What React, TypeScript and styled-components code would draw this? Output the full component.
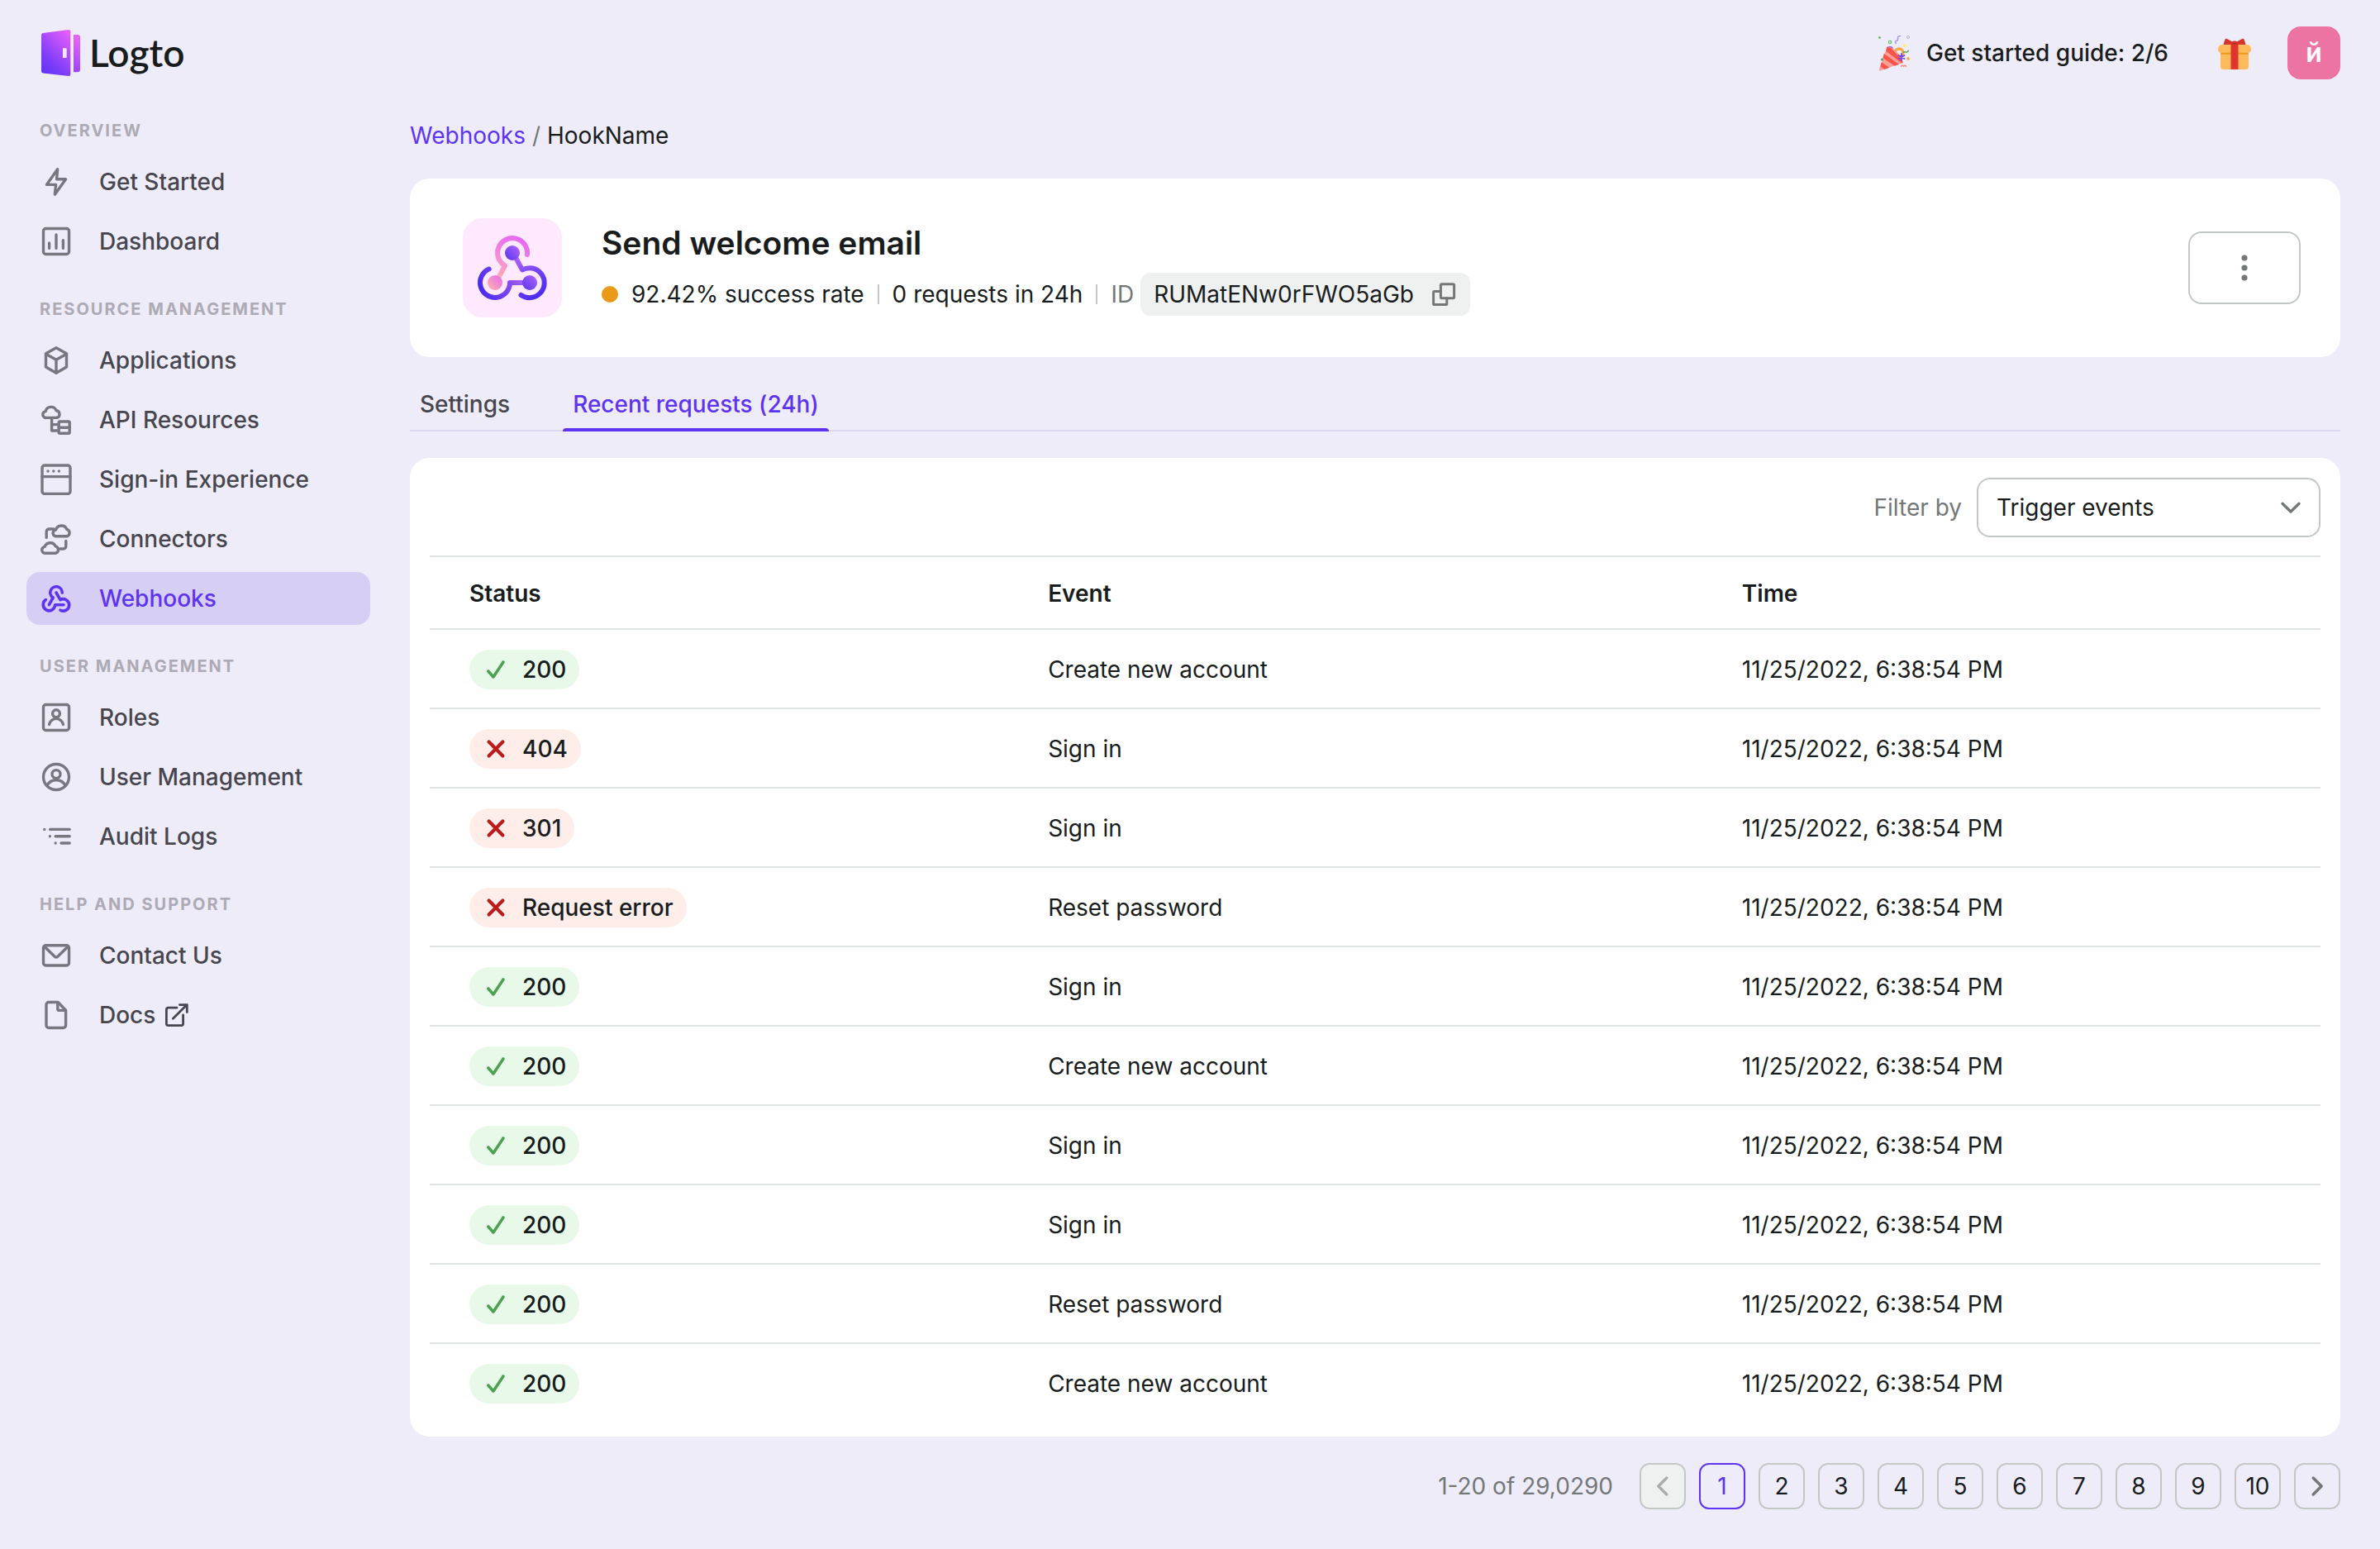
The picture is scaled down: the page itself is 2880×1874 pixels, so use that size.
import React, { useState } from "react";
import styled, { createGlobalStyle, css } from "styled-components";

const color = {
  page: "#eeecf9",
  card: "#ffffff",
  text: "#191c1d",
  navText: "#47464e",
  navIcon: "#78767f",
  navTitle: "#adaab4",
  muted: "#747778",
  border: "#c4c7c7",
  divider: "#e0e3e3",
  tabLine: "#dcd8f2",
  primary: "#5d34f2",
  active: "#d7cef5",
  chip: "#eff1f1",
  okBg: "#e8f9e9",
  ok: "#4ea254",
  badBg: "#ffedea",
  bad: "#ba1b1b",
  avatar: "#ed73a3",
};

const GlobalStyle = createGlobalStyle`
  *, *::before, *::after { box-sizing: border-box; }
  body {
    margin: 0;
    background: ${color.page};
    color: ${color.text};
    font-family: Inter, "Liberation Sans", sans-serif;
    font-size: 28px;
    line-height: 40px;
  }
  button, select { font: inherit; color: inherit; }
  a { color: inherit; text-decoration: none; }
`;

/* ---------- layout ---------- */

const Page = styled.div`
  min-height: 100vh;
  display: flex;
  flex-direction: column;
`;

const TopBar = styled.header`
  height: 128px;
  padding: 0 48px;
  display: flex;
  align-items: center;
  justify-content: space-between;
`;

const Brand = styled.a`
  display: flex;
  align-items: center;
  gap: 8px;
  font-family: Lato, sans-serif;
  font-size: 46px;
  font-weight: 600;
  line-height: 56px;
`;

const TopActions = styled.div`
  display: flex;
  align-items: center;
  gap: 40px;
`;

const GuideButton = styled.button`
  display: flex;
  align-items: center;
  gap: 20px;
  margin-right: 16px;
  padding: 0;
  border: 0;
  background: none;
  font-weight: 500;
`;

const IconButton = styled.button`
  display: flex;
  padding: 0;
  border: 0;
  background: none;
`;

const Avatar = styled.button`
  width: 64px;
  height: 64px;
  padding: 0;
  border: 0;
  border-radius: 16px;
  background: ${color.avatar};
  color: #ffffff;
  font-size: 32px;
  font-weight: 600;
`;

const Body = styled.div`
  flex: 1;
  display: flex;
`;

const Sidebar = styled.nav`
  flex: 0 0 448px;
  padding: 14px 0 48px 32px;
  display: flex;
  flex-direction: column;
  gap: 34px;
`;

const NavSection = styled.section`
  display: flex;
  flex-direction: column;
`;

const NavTitle = styled.h2`
  margin: 0 0 14px;
  padding-left: 16px;
  color: ${color.navTitle};
  font-size: 20px;
  font-weight: 700;
  line-height: 32px;
  letter-spacing: 2px;
  text-transform: uppercase;
`;

const NavList = styled.ul`
  margin: 0;
  padding: 0;
  list-style: none;
  display: flex;
  flex-direction: column;
  gap: 8px;
`;

const NavLink = styled.a<{ $active?: boolean }>`
  height: 64px;
  padding: 0 16px;
  display: flex;
  align-items: center;
  gap: 32px;
  border-radius: 16px;
  color: ${color.navText};
  font-weight: 500;
  svg { color: ${color.navIcon}; }
  ${(p) =>
    p.$active &&
    css`
      background: ${color.active};
      color: ${color.primary};
      svg { color: ${color.primary}; }
    `}
`;

const NavLabel = styled.span`
  display: flex;
  align-items: center;
  gap: 12px;
  && svg { color: ${color.navText}; }
`;

const Main = styled.main`
  flex: 1;
  min-width: 0;
  padding: 16px 48px 48px;
  display: flex;
  flex-direction: column;
`;

/* ---------- header card ---------- */

const Breadcrumb = styled.nav`
  display: flex;
  gap: 8px;
  margin-bottom: 32px;
`;

const CrumbLink = styled.a`
  color: ${color.primary};
`;

const CrumbSlash = styled.span`
  color: ${color.muted};
`;

const HookCard = styled.section`
  padding: 48px 48px 48px 64px;
  display: flex;
  align-items: center;
  gap: 48px;
  border-radius: 24px;
  background: ${color.card};
`;

const HookInfo = styled.div`
  flex: 1;
  padding-top: 4px;
  display: flex;
  flex-direction: column;
  gap: 12px;
`;

const HookTitle = styled.h1`
  margin: 0;
  font-size: 39px;
  font-weight: 600;
  line-height: 48px;
`;

const MetaRow = styled.div`
  display: flex;
  align-items: center;
  gap: 16px;
`;

const StatusDot = styled.span`
  width: 20px;
  height: 20px;
  border-radius: 50%;
  background: #eb9918;
`;

const MetaDivider = styled.span`
  width: 2px;
  height: 24px;
  background: ${color.border};
`;

const IdGroup = styled.div`
  display: flex;
  align-items: center;
  gap: 8px;
  color: ${color.muted};
`;

const IdChip = styled.span`
  height: 52px;
  padding: 0 12px 0 16px;
  display: flex;
  align-items: center;
  gap: 16px;
  border-radius: 12px;
  background: ${color.chip};
  color: ${color.text};
  svg { color: ${color.muted}; }
`;

const MoreButton = styled.button`
  width: 136px;
  height: 88px;
  display: flex;
  align-items: center;
  justify-content: center;
  border: 2px solid ${color.border};
  border-radius: 16px;
  background: ${color.card};
  color: ${color.muted};
`;

/* ---------- tabs ---------- */

const Tabs = styled.div`
  margin: 24px 0 32px;
  display: flex;
  gap: 52px;
  box-shadow: inset 0 -2px ${color.tabLine};
`;

const Tab = styled.button<{ $active?: boolean }>`
  height: 66px;
  padding: 0 12px;
  border: 0;
  background: none;
  color: ${(p) => (p.$active ? color.primary : color.navText)};
  font-weight: 500;
  position: relative;
  &::after {
    content: "";
    position: absolute;
    left: 0;
    right: 0;
    bottom: 0;
    height: 4px;
    border-radius: 4px 4px 0 0;
    background: ${(p) => (p.$active ? color.primary : "transparent")};
  }
`;

/* ---------- table ---------- */

const TableCard = styled.section`
  padding: 24px 24px 16px;
  border-radius: 24px;
  background: ${color.card};
`;

const FilterRow = styled.div`
  display: flex;
  align-items: center;
  justify-content: flex-end;
  gap: 18px;
  margin-bottom: 22px;
`;

const FilterLabel = styled.label`
  color: ${color.muted};
`;

const SelectBox = styled.span`
  position: relative;
  width: 416px;
  svg {
    position: absolute;
    right: 16px;
    top: 16px;
    color: ${color.muted};
    pointer-events: none;
  }
`;

const Select = styled.select`
  display: block;
  width: 100%;
  height: 72px;
  padding: 0 64px 0 22px;
  appearance: none;
  border: 2px solid ${color.border};
  border-radius: 16px;
  background: ${color.card};
`;

const Table = styled.table`
  width: 100%;
  table-layout: fixed;
  border-collapse: separate;
  border-spacing: 0;
  border-top: 2px solid ${color.divider};
`;

const HeadCell = styled.th<{ $width?: string }>`
  width: ${(p) => p.$width ?? "auto"};
  height: 88px;
  padding: 2px 48px 0;
  border-bottom: 2px solid ${color.divider};
  text-align: left;
  font-weight: 600;
`;

const Cell = styled.td`
  height: 96px;
  padding: 2px 48px 0;
  border-bottom: 2px solid ${color.divider};
  tr:last-child > & { border-color: transparent; }
`;

const Pill = styled.span<{ $ok: boolean }>`
  width: fit-content;
  height: 48px;
  padding: 0 16px 0 12px;
  display: flex;
  align-items: center;
  gap: 12px;
  border-radius: 24px;
  background: ${(p) => (p.$ok ? color.okBg : color.badBg)};
  font-weight: 500;
  svg { color: ${(p) => (p.$ok ? color.ok : color.bad)}; }
`;

/* ---------- pagination ---------- */

const Pagination = styled.nav`
  margin-top: 32px;
  display: flex;
  align-items: center;
  justify-content: flex-end;
  gap: 16px;
`;

const PageSummary = styled.span`
  margin-right: 16px;
  color: ${color.muted};
`;

const PageButton = styled.button<{ $active?: boolean }>`
  width: 56px;
  height: 56px;
  padding: 0;
  display: flex;
  align-items: center;
  justify-content: center;
  border: 2px solid ${(p) => (p.$active ? color.primary : color.border)};
  border-radius: 12px;
  background: none;
  color: ${(p) => (p.$active ? color.primary : color.text)};
  svg { color: ${color.muted}; }
  &:disabled {
    background: ${color.chip};
    svg { color: #a9acac; }
  }
`;

/* ---------- icons ---------- */

const Icon = ({ children, size = 40, stroke = 1.5 }: { children: React.ReactNode; size?: number; stroke?: number }) => (
  <svg
    width={size}
    height={size}
    viewBox="0 0 20 20"
    fill="none"
    stroke="currentColor"
    strokeWidth={stroke}
    strokeLinecap="round"
    strokeLinejoin="round"
    aria-hidden="true"
  >
    {children}
  </svg>
);

const Dot = ({ x, y, r = 0.85 }: { x: number; y: number; r?: number }) => (
  <circle cx={x} cy={y} r={r} fill="currentColor" stroke="none" />
);

const BoltIcon = () => (
  <Icon stroke={1.7}><path d="M10.8 2.4 4.2 11.7h5.6l-.6 5.9 6.6-9.2h-5.5z" /></Icon>
);
const DashboardIcon = () => (
  <Icon stroke={1.7}>
    <rect x="2.25" y="2.25" width="15.5" height="15.5" rx="1.5" />
    <path d="M5.8 11v3.2M10 6v8.2M14.2 9.3v4.9" />
  </Icon>
);
const CubeIcon = () => (
  <Icon stroke={1.7}><path d="m10 2.4 6.25 3.5v8.1L10 17.6 3.75 14V5.9zM4 6.2l6 3.4 6-3.4M10 9.6v7.8" /></Icon>
);
const ApiIcon = () => (
  <Icon stroke={1.7}>
    <path d="M4.1 8.7a1.95 1.95 0 0 1-.5-3.9 3.4 3.4 0 0 1 6.5-.4 2.2 2.2 0 0 1 .3 4.3z" />
    <path d="M7.3 8.9v7.6h4M7.3 12.8h4" />
    <rect x="11.6" y="11" width="6.5" height="7.1" rx=".6" />
    <path d="M11.6 14.6h6.5" />
  </Icon>
);
const WindowIcon = () => (
  <Icon stroke={1.7}>
    <rect x="1.5" y="1.5" width="17" height="17.2" rx="1.5" />
    <path d="M1.5 8.3h17" />
    <Dot x={5} y={5} /><Dot x={8.4} y={5} /><Dot x={11.7} y={5} />
  </Icon>
);
const ConnectorsIcon = () => (
  <Icon stroke={1.7}>
    <path d="M10.2 8.4a1.95 1.95 0 0 1-.4-3.9 3.5 3.5 0 0 1 6.6-.3 2.2 2.2 0 0 1 .2 4.2z" />
    <path d="M3.5 18.6a1.95 1.95 0 0 1-.4-3.9 3.5 3.5 0 0 1 6.5-.3 2.2 2.2 0 0 1 .2 4.2z" />
    <path d="M4.1 9.2V5.6a1.6 1.6 0 0 1 1.6-1.6h2.9M15.9 11.2v3.2a1.6 1.6 0 0 1-1.6 1.6h-2" />
  </Icon>
);
const WebhookIcon = () => (
  <Icon stroke={1.8}>
    <path d="M13.6 6.6a3.6 3.6 0 1 0-5.5 2.9L5.7 13.8" />
    <path d="m10 6.5 2.5 4.3a3.6 3.6 0 1 1 0 6.3" />
    <path d="M3.7 10.8a3.6 3.6 0 1 0 5.6 3.1h5.2" />
  </Icon>
);
const RoleIcon = () => (
  <Icon stroke={1.7}>
    <rect x="2.25" y="2.25" width="15.5" height="15.5" rx="1.5" />
    <circle cx="10" cy="7.6" r="2.2" />
    <path d="M5.8 14.3a4.25 4.25 0 0 1 8.4 0" />
  </Icon>
);
const UserIcon = () => (
  <Icon stroke={1.7}>
    <circle cx="10" cy="10" r="7.75" />
    <circle cx="10" cy="8.3" r="2.5" />
    <path d="M4.4 15.2a6.4 6.4 0 0 1 11.2 0" />
  </Icon>
);
const LogsIcon = () => (
  <Icon stroke={1.7}>
    <path d="M6.3 5.7h11.8M9.6 9.9h8.5M13 14h5.1" />
    <Dot x={2.9} y={5.7} /><Dot x={6.2} y={9.9} /><Dot x={9.6} y={14} />
  </Icon>
);
const MailIcon = () => (
  <Icon stroke={1.7}>
    <rect x="2.25" y="3.9" width="15.5" height="12.1" rx="1.5" />
    <path d="m2.8 4.5 6.3 6.1a1.3 1.3 0 0 0 1.8 0l6.3-6.1" />
  </Icon>
);
const DocIcon = () => (
  <Icon stroke={1.7}>
    <path d="M5.5 2.25h5.6l4.7 4.9v9.1a1.5 1.5 0 0 1-1.5 1.5H5.5a1.5 1.5 0 0 1-1.5-1.5V3.75a1.5 1.5 0 0 1 1.5-1.5z" />
    <path d="M10.9 2.6v3.6a1 1 0 0 0 1 1h3.7" />
  </Icon>
);
const ExternalIcon = () => (
  <svg width="28" height="28" viewBox="0 0 28 28" fill="none" stroke="currentColor" strokeWidth="2.8" strokeLinecap="round" strokeLinejoin="round" aria-hidden="true">
    <path d="M14 5.2H3.4a2 2 0 0 0-2 2v17.4a2 2 0 0 0 2 2h16.2a2 2 0 0 0 2-2V14M9.4 18.2 26.2 1.6M17.4 1.6h8.9v9" />
  </svg>
);
const CopyIcon = () => (
  <Icon>
    <rect x="8.2" y="3.9" width="8.1" height="8.5" rx=".6" />
    <path d="M8.2 8.2H4.4a.6.6 0 0 0-.6.6v6.9a.6.6 0 0 0 .6.6h6.9a.6.6 0 0 0 .6-.6v-3.3" />
  </Icon>
);
const MoreIcon = () => (
  <Icon stroke={0}><Dot x={10} y={4} r={1.8} /><Dot x={10} y={10} r={1.8} /><Dot x={10} y={16} r={1.8} /></Icon>
);
const ChevronDown = () => (
  <Icon stroke={1.7}><path d="m5 7.6 5 4.9 5-4.9" /></Icon>
);
const ChevronLeft = () => (
  <Icon stroke={1.7}><path d="m12.4 5-5 5 5 5" /></Icon>
);
const ChevronRight = () => (
  <Icon stroke={1.7}><path d="m7.6 5 5 5-5 5" /></Icon>
);
const CheckIcon = () => (
  <Icon stroke={1.8}><path d="m5.4 11 3.1 3.5 6-9" /></Icon>
);
const CrossIcon = () => (
  <Icon stroke={2.1}><path d="m5.8 5.8 8.4 8.4M14.2 5.8l-8.4 8.4" /></Icon>
);

const LogoMark = () => (
  <svg width="52" height="64" viewBox="0 0 52 64" aria-hidden="true">
    <defs>
      <linearGradient id="door" x1="2" y1="58" x2="44" y2="14" gradientUnits="userSpaceOnUse">
        <stop offset="0" stopColor="#5d34f2" />
        <stop offset=".3" stopColor="#7a3cfb" />
        <stop offset="1" stopColor="#e95ffa" />
      </linearGradient>
    </defs>
    <g fill="url(#door)">
      <path
        fillRule="evenodd"
        d="M4 8 35 4q2.3-.2 2.3 2v52q0 2.2-2.3 2L4 56.4q-2-.3-2-2.2V10.2Q2 8.3 4 8zM28.600 26.3q-.6 0-.6.6v10.5q0 .6.6.6h3.5q.6 0 .6-.6V26.9q0-.6-.6-.6z"
      />
      <path d="M41 10h5q3 0 3 3v39.3q0 3-3 3h-5z" />
    </g>
  </svg>
);

const PartyIcon = () => (
  <svg width="48" height="48" viewBox="0 0 48 48" fill="none" strokeLinecap="round" aria-hidden="true">
    <circle cx="35" cy="24" r="5" stroke="#fbaa3c" strokeWidth="3.4" />
    <circle cx="24" cy="20" r="4" fill="#7d5cf5" />
    <path d="M20.5 16.5Q25 15.5 32 22.5t7.5 13.5L12.2 45.6q-1.7.4-1.3-1.4z" fill="#ff9f96" />
    <path d="m20.5 16.5-1.4 5.2 19.3 14.7 1.3-.5-1.2-4.2L25 18zM16.8 24.8l-1.3 5.4 14.3 9.5 5.2-1.8zM13.8 35.3l-1.4 5.3 5.1 3.3 5.9-2.1z" fill="#f9544a" />
    <circle cx="14.5" cy="32" r="1.5" fill="#4ea254" />
    <circle cx="11.5" cy="5.5" r="1.3" fill="#4ea254" />
    <circle cx="24" cy="11" r="1.7" stroke="#68be6c" strokeWidth="1.2" />
    <path d="M36.5 3.5q-3.5.2-3 2.9t-1.7 3.2-.6 2.9" stroke="#a895f8" strokeWidth="1.5" />
    <circle cx="46" cy="5" r="1.5" stroke="#b9b5c6" strokeWidth="1" />
    <circle cx="42" cy="15" r="2.1" fill="#fdf07a" />
    <path d="M40.5 23.200q1.5-1 2.600-.2t3.200-1.600" stroke="#4ea254" strokeWidth="1.5" />
    <path d="M38 25v8M34.5 27l7 4M41.5 27l-7 4" stroke="#6a48f2" strokeWidth="1.8" />
    <path d="M37.5 40.2q1.5-1.8 3 0 1.5-1.8 3.2 0" stroke="#f48a72" strokeWidth="1.4" />
    <circle cx="46" cy="31" r="1.9" fill="#fbaa3c" />
  </svg>
);

const GiftIcon = () => (
  <svg width="48" height="48" viewBox="0 0 48 48" aria-hidden="true">
    <path d="M10 15.5 12.500 7.500q1-1.400 2.300-.5l6.200 3.300q3-1.400 6 0l6.200-3.300q1.300-.9 2.300.5l2.500 8z" fill="#d5342c" />
    <rect x="7" y="16" width="34" height="28" rx="3.5" fill="#ffba5c" />
    <rect x="4" y="14" width="40" height="10.5" rx="5" fill="#ffba5c" />
    <path d="M7.5 23.7h33v2h-33z" fill="#ee9a1d" />
    <path d="M19.500 12h9v32h-9z" fill="#e0352c" />
    <path d="M19.500 14q4.500-5 9 0z" fill="#c42a24" />
  </svg>
);

const WebhookMark = () => (
  <svg width="120" height="120" viewBox="0 0 120 120" fill="none" aria-hidden="true">
    <defs>
      <linearGradient id="topArc" x1="70" y1="24" x2="42" y2="76" gradientUnits="userSpaceOnUse">
        <stop offset="0" stopColor="#e568f4" />
        <stop offset=".5" stopColor="#f487dc" />
        <stop offset="1" stopColor="#ffb5a5" />
      </linearGradient>
      <linearGradient id="leftArc" x1="24" y1="92" x2="78" y2="70" gradientUnits="userSpaceOnUse">
        <stop offset="0" stopColor="#4a2cee" />
        <stop offset=".5" stopColor="#7a45f4" />
        <stop offset="1" stopColor="#b566fb" />
      </linearGradient>
      <linearGradient id="rightArc" x1="62" y1="46" x2="92" y2="96" gradientUnits="userSpaceOnUse">
        <stop offset="0" stopColor="#b566fb" />
        <stop offset=".5" stopColor="#7445f4" />
        <stop offset="1" stopColor="#4a2cee" />
      </linearGradient>
      <linearGradient id="ball" x1="0" y1="1" x2="1" y2="0">
        <stop offset="0" stopColor="#5433ee" />
        <stop offset="1" stopColor="#b566fb" />
      </linearGradient>
      <linearGradient id="pinkBall" x1="0" y1="1" x2="1" y2="0">
        <stop offset="0" stopColor="#ffb5a5" />
        <stop offset="1" stopColor="#e568f4" />
      </linearGradient>
    </defs>
    <rect width="120" height="120" rx="24" fill="#ffe9ff" />
    <g strokeWidth="6" strokeLinecap="round" strokeLinejoin="round">
      <path d="M78 44a18 18 0 1 0-27 13.6L41 76" stroke="url(#topArc)" />
      <path d="M31.7 61.5A18 18 0 1 0 57 78h20" stroke="url(#leftArc)" />
      <path d="m62 44 10 18.4A18 18 0 1 1 70.5 93" stroke="url(#rightArc)" />
    </g>
    <circle cx="60" cy="42" r="9" fill="url(#ball)" />
    <circle cx="39" cy="78" r="9" fill="url(#pinkBall)" />
    <circle cx="81" cy="78" r="9" fill="url(#ball)" />
  </svg>
);

/* ---------- data ---------- */

type NavItem = { label: string; icon: () => React.JSX.Element; active?: boolean; external?: boolean };

const sections: { title: string; items: NavItem[] }[] = [
  {
    title: "Overview",
    items: [
      { label: "Get Started", icon: BoltIcon },
      { label: "Dashboard", icon: DashboardIcon },
    ],
  },
  {
    title: "Resource management",
    items: [
      { label: "Applications", icon: CubeIcon },
      { label: "API Resources", icon: ApiIcon },
      { label: "Sign-in Experience", icon: WindowIcon },
      { label: "Connectors", icon: ConnectorsIcon },
      { label: "Webhooks", icon: WebhookIcon, active: true },
    ],
  },
  {
    title: "User management",
    items: [
      { label: "Roles", icon: RoleIcon },
      { label: "User Management", icon: UserIcon },
      { label: "Audit Logs", icon: LogsIcon },
    ],
  },
  {
    title: "Help and support",
    items: [
      { label: "Contact Us", icon: MailIcon },
      { label: "Docs", icon: DocIcon, external: true },
    ],
  },
];

const requests: [string, string][] = [
  ["200", "Create new account"],
  ["404", "Sign in"],
  ["301", "Sign in"],
  ["Request error", "Reset password"],
  ["200", "Sign in"],
  ["200", "Create new account"],
  ["200", "Sign in"],
  ["200", "Sign in"],
  ["200", "Reset password"],
  ["200", "Create new account"],
];

const requestTime = "11/25/2022, 6:38:54 PM";
const pages = [1, 2, 3, 4, 5, 6, 7, 8, 9, 10];

/* ---------- page ---------- */

export default function App() {
  const [page, setPage] = useState(1);

  return (
    <>
      <GlobalStyle />
      <Page>
        <TopBar>
          <Brand href="#"><LogoMark />Logto</Brand>
          <TopActions>
            <GuideButton type="button"><PartyIcon />Get started guide: 2/6</GuideButton>
            <IconButton type="button" aria-label="Rewards"><GiftIcon /></IconButton>
            <Avatar type="button">й</Avatar>
          </TopActions>
        </TopBar>
        <Body>
          <Sidebar>
            {sections.map((section) => (
              <NavSection key={section.title}>
                <NavTitle>{section.title}</NavTitle>
                <NavList>
                  {section.items.map(({ label, icon: ItemIcon, active, external }) => (
                    <li key={label}>
                      <NavLink href="#" $active={active}>
                        <ItemIcon />
                        <NavLabel>
                          {label}
                          {external && <ExternalIcon />}
                        </NavLabel>
                      </NavLink>
                    </li>
                  ))}
                </NavList>
              </NavSection>
            ))}
          </Sidebar>
          <Main>
            <Breadcrumb>
              <CrumbLink href="#">Webhooks</CrumbLink>
              <CrumbSlash>/</CrumbSlash>
              <span>HookName</span>
            </Breadcrumb>
            <HookCard>
              <WebhookMark />
              <HookInfo>
                <HookTitle>Send welcome email</HookTitle>
                <MetaRow>
                  <StatusDot />
                  <span>92.42% success rate</span>
                  <MetaDivider />
                  <span>0 requests in 24h</span>
                  <MetaDivider />
                  <IdGroup>
                    ID
                    <IdChip>
                      RUMatENw0rFWO5aGb
                      <IconButton type="button" aria-label="Copy ID"><CopyIcon /></IconButton>
                    </IdChip>
                  </IdGroup>
                </MetaRow>
              </HookInfo>
              <MoreButton type="button" aria-label="More actions"><MoreIcon /></MoreButton>
            </HookCard>
            <Tabs role="tablist">
              <Tab type="button" role="tab">Settings</Tab>
              <Tab type="button" role="tab" $active aria-selected>Recent requests (24h)</Tab>
            </Tabs>
            <TableCard>
              <FilterRow>
                <FilterLabel htmlFor="filter">Filter by</FilterLabel>
                <SelectBox>
                  <Select id="filter">
                    <option>Trigger events</option>
                  </Select>
                  <ChevronDown />
                </SelectBox>
              </FilterRow>
              <Table>
                <thead>
                  <tr>
                    <HeadCell $width="30.6%">Status</HeadCell>
                    <HeadCell $width="36.7%">Event</HeadCell>
                    <HeadCell>Time</HeadCell>
                  </tr>
                </thead>
                <tbody>
                  {requests.map(([status, event], index) => {
                    const ok = status === "200";
                    return (
                      <tr key={index}>
                        <Cell>
                          <Pill $ok={ok}>{ok ? <CheckIcon /> : <CrossIcon />}{status}</Pill>
                        </Cell>
                        <Cell>{event}</Cell>
                        <Cell>{requestTime}</Cell>
                      </tr>
                    );
                  })}
                </tbody>
              </Table>
            </TableCard>
            <Pagination aria-label="Pages">
              <PageSummary>1-20 of 29,0290</PageSummary>
              <PageButton type="button" aria-label="Previous page" disabled={page === 1} onClick={() => setPage(page - 1)}>
                <ChevronLeft />
              </PageButton>
              {pages.map((n) => (
                <PageButton key={n} type="button" $active={n === page} onClick={() => setPage(n)}>{n}</PageButton>
              ))}
              <PageButton type="button" aria-label="Next page" onClick={() => setPage(Math.min(page + 1, 10))}>
                <ChevronRight />
              </PageButton>
            </Pagination>
          </Main>
        </Body>
      </Page>
    </>
  );
}
